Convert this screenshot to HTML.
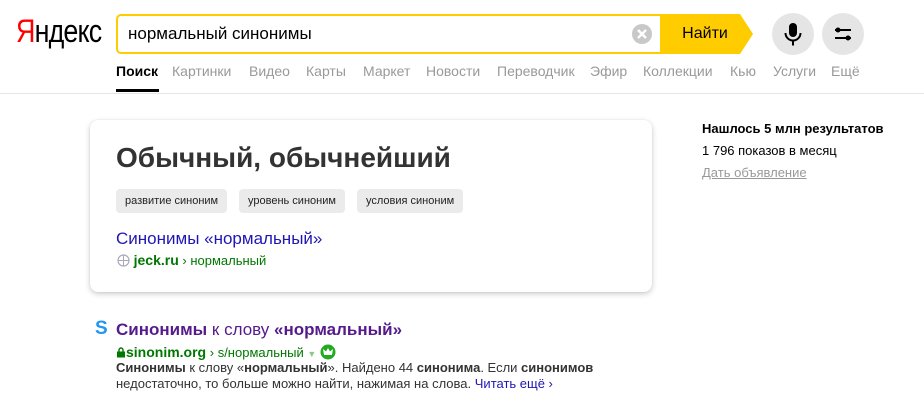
<!DOCTYPE html>
<html><head><meta charset="utf-8"><style>
*{margin:0;padding:0;box-sizing:border-box}
body{width:924px;height:412px;background:#fff;font-family:"Liberation Sans",Arial,sans-serif;position:relative;overflow:hidden;color:#000}
.a{position:absolute;white-space:nowrap}
.logo{left:16px;top:13px;font-size:32px;letter-spacing:-1px;transform:scaleX(0.84);transform-origin:left}
.box{left:116px;top:14px;width:550px;height:40px;border:2px solid #fc0;border-radius:5px 0 0 5px;border-right:none}
.q{left:128px;top:24px;font-size:17px}
.clr{left:632px;top:24px;width:20px;height:20px;border-radius:50%;background:#c8c8c8}
.btn{left:660px;top:14px;width:80px;height:40px;background:#fc0;font-size:16px;text-align:center;line-height:40px;padding-left:10px}
.tip{left:740px;top:14px;width:0;height:0;border-top:20px solid transparent;border-bottom:20px solid transparent;border-left:13px solid #fc0}
.circ{width:42px;height:42px;border-radius:50%;background:#e5e5e5;top:13px}
.t{top:63px;font-size:14px;color:#999}
.ul{left:116px;top:89px;width:43px;height:3px;background:#000}
.hr{left:0;top:93px;width:924px;height:1px;background:#e6e6e6}
.card{left:90px;top:120px;width:562px;height:172px;border-radius:8px;box-shadow:0 2px 6px rgba(0,0,0,.2),0 0 1px rgba(0,0,0,.15)}
.h{left:116px;top:142px;font-size:28px;font-weight:bold;color:#333}
.chip{top:189px;height:24px;background:#ebebeb;border-radius:4px;font-size:11px;line-height:24px;padding:0 9px;color:#222}
.lnk{left:116px;top:229px;font-size:17px;color:#2015b4}
.g{color:#070}
</style></head><body>
<div class="a logo"><span style="color:#f00">Я</span>ндекс</div>
<div class="a box"></div>
<div class="a q">нормальный синонимы</div>
<div class="a clr"><svg width="20" height="20"><path d="M6 6L14 14M14 6L6 14" stroke="#fff" stroke-width="2.4"/></svg></div>
<div class="a btn">Найти</div>
<div class="a tip"></div>
<div class="a circ" style="left:772px"><svg width="42" height="42"><rect x="17" y="10" width="8" height="14" rx="4" fill="#000"/><path d="M13.5 20a7.5 7.5 0 0 0 15 0M21 27.5v5" stroke="#000" stroke-width="2" fill="none"/></svg></div>
<div class="a circ" style="left:822px"><svg width="42" height="42"><path d="M13 17h16M13 25h16" stroke="#000" stroke-width="2"/><circle cx="16" cy="17" r="2.5"/><circle cx="26" cy="25" r="2.5"/></svg></div>
<div class="a t" style="left:116px;color:#000;font-weight:bold">Поиск</div>
<div class="a t" style="left:172px">Картинки</div>
<div class="a t" style="left:249px">Видео</div>
<div class="a t" style="left:306px">Карты</div>
<div class="a t" style="left:363px">Маркет</div>
<div class="a t" style="left:426px">Новости</div>
<div class="a t" style="left:497px">Переводчик</div>
<div class="a t" style="left:590px">Эфир</div>
<div class="a t" style="left:643px">Коллекции</div>
<div class="a t" style="left:730px">Кью</div>
<div class="a t" style="left:773px">Услуги</div>
<div class="a t" style="left:831px">Ещё</div>
<div class="a ul"></div><div class="a hr"></div>
<div class="a card"></div>
<div class="a h">Обычный, обычнейший</div>
<div class="a chip" style="left:116px">развитие синоним</div>
<div class="a chip" style="left:239px">уровень синоним</div>
<div class="a chip" style="left:357px">условия синоним</div>
<div class="a lnk">Синонимы «нормальный»</div>
<div class="a" style="left:117px;top:252px;font-size:13px"><svg width="13" height="13" style="vertical-align:-2px"><circle cx="6.5" cy="6.5" r="5.5" fill="none" stroke="#aab" stroke-width="1.2"/><path d="M1 6.5h11M6.5 1v11" stroke="#aab"/></svg> <b class="g" style="font-size:14px">jeck.ru</b> <span class="g">› нормальный</span></div>
<div class="a" style="left:95px;top:318px;font-size:19px;font-weight:bold;color:#2196f3">S</div>
<div class="a" style="left:116px;top:320px;font-size:17px;color:#551a8b"><b>Синонимы</b> к слову <b>«нормальный»</b></div>
<div class="a" style="left:116px;top:344px;font-size:13px"><svg width="10" height="11" style="vertical-align:-1px"><rect x="1" y="4.5" width="8" height="6" fill="#070"/><path d="M3 5V3a2 2 0 0 1 4 0v2" stroke="#070" stroke-width="1.4" fill="none"/></svg><b class="g" style="font-size:14px">sinonim.org</b> <span class="g">› s/нормальный</span> <span style="color:#8c8;font-size:9px">▼</span> <svg width="16" height="16" style="vertical-align:-3px"><circle cx="8" cy="8" r="7.5" fill="#2a2"/><path d="M4 11h8l1-6-3 2.5L8 4 6 7.5 3 5z" fill="#fff"/></svg></div>
<div class="a" style="left:116px;top:360px;font-size:13px;line-height:16px;color:#333"><b>Синонимы</b> к слову «<b>нормальный</b>». Найдено 44 <b>синонима</b>. Если <b>синонимов</b><br>недостаточно, то больше можно найти, нажимая на слова. <span style="color:#2015b4">Читать ещё ›</span></div>
<div class="a" style="left:702px;top:121px;font-size:13px;font-weight:bold">Нашлось 5 млн результатов</div>
<div class="a" style="left:702px;top:143px;font-size:13px">1 796 показов в месяц</div>
<div class="a" style="left:702px;top:165px;font-size:13px;color:#999;text-decoration:underline">Дать объявление</div>
</body></html>
